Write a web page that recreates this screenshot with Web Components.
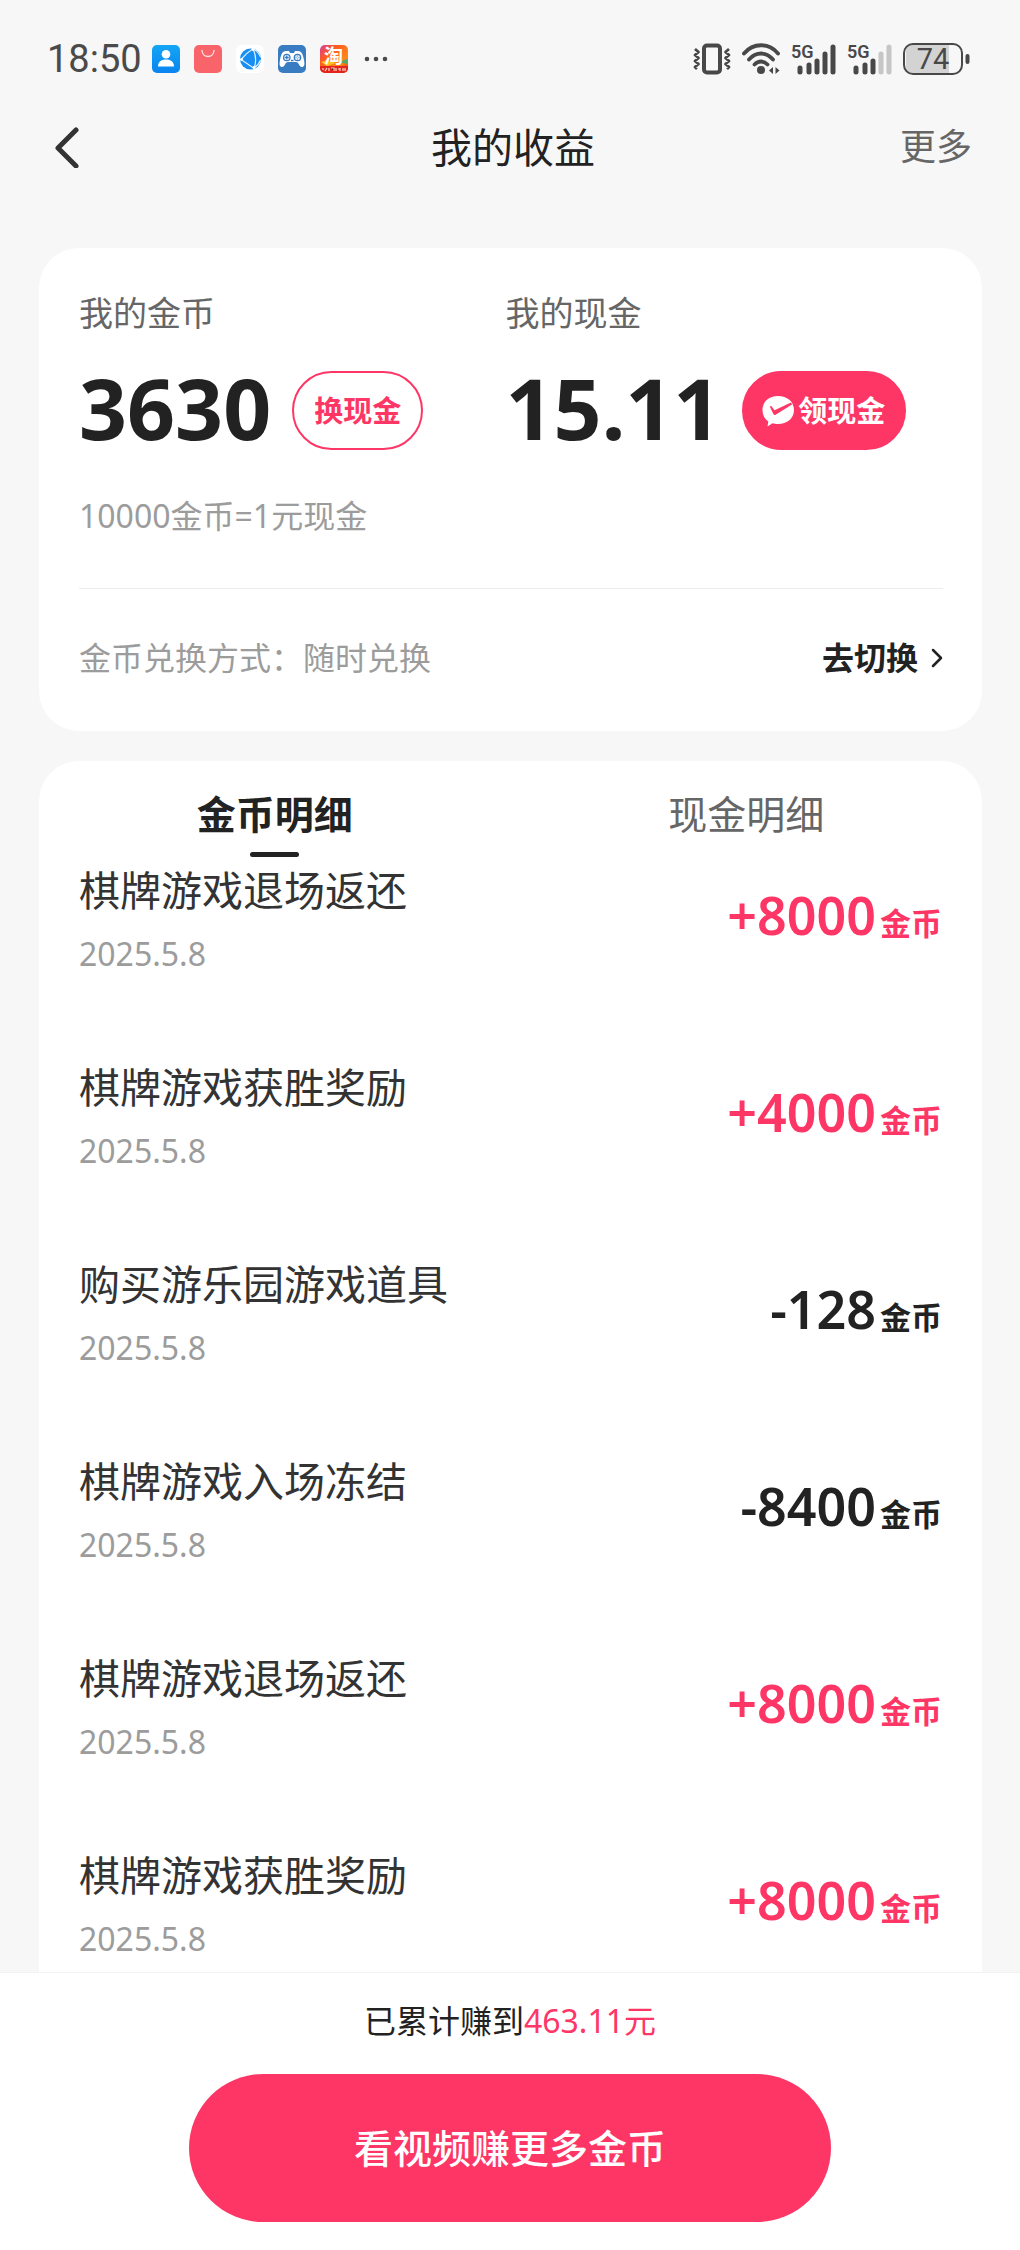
<!DOCTYPE html>
<html lang="zh-CN">
<head>
<meta charset="utf-8">
<meta name="viewport" content="width=device-width, initial-scale=1">
<title>我的收益</title>
<style>
  :root {
    --ink: #222222;
    --sub: #666666;
    --mute: #9c9c9c;
    --brand: #fe3666;
    --page: #f7f7f7;
    --line: #ececec;
  }
  html, body { margin: 0; height: 100%; }
  body {
    background: var(--page);
    color: var(--ink);
    font-family: "Noto Sans", "Noto Sans CJK SC", sans-serif;
  }
</style>
</head>
<body>
<income-page></income-page>

<script>
const base = `
  *, *::before { box-sizing: border-box; }
  button { font: inherit; color: inherit; background: none; border: 0; padding: 0; margin: 0; cursor: pointer; }
  a { color: inherit; text-decoration: none; }
  svg { display: block; flex: none; }
`;

function define(name, css, html) {
  const template = document.createElement('template');
  customElements.define(name, class extends HTMLElement {
    connectedCallback() {
      if (this.shadowRoot) return;
      template.innerHTML = `<style>${base}${css}</style>` + (typeof html === 'function' ? html(this) : html);
      this.attachShadow({ mode: 'open' }).append(template.content.cloneNode(true));
    }
  });
}

define('status-bar', `
  :host { display: flex; justify-content: space-between; align-items: center; height: 118px; padding: 0 50px 0 47px; color: #4a4a4a; }
  .group { display: flex; align-items: center; gap: 14px; }
  .clock { gap: 10px; }
  .right { gap: 11px; }
  time { font: 38px/48px Roboto, sans-serif; }
  text { font-family: Roboto, "Noto Sans CJK SC", sans-serif; }
`, `
  <div class="group clock">
    <time>18:50</time>
    <div class="group">
    <svg width="28" height="28" viewBox="0 0 28 28"><defs><linearGradient id="c" x2="0" y2="1"><stop stop-color="#14a6f5"/><stop offset="1" stop-color="#0a84f0"/></linearGradient></defs><rect width="28" height="28" rx="5" fill="url(#c)"/><circle cx="14" cy="9.200" r="4.300" fill="#fff"/><path d="M6 21.500c0-4.500 3.200-7 8-7s8 2.500 8 7z" fill="#fff"/></svg>
    <svg width="28" height="28" viewBox="0 0 28 28"><rect width="28" height="28" rx="5" fill="#f9646b"/><path d="M8 5.500c.5 8 11.500 8 12 0" fill="none" stroke="#ffe3e3" stroke-width="1.300" stroke-linecap="round"/></svg>
    <svg width="28" height="28" viewBox="0 0 28 28"><rect width="28" height="28" rx="6" fill="#fff"/><circle cx="14.500" cy="14" r="10.500" fill="#198ef2"/><path d="M17 3.800C12 7 7.500 11.500 5 14.500 9.500 17.500 14 20.500 18 23.500 20.500 17 20 10 17 3.800M17 4c3 1 6 4.500 7.500 8M18 23c3-2 5.500-5 6.500-8" fill="none" stroke="#d7efff" stroke-width="1.200"/><circle cx="17" cy="4.500" r="1.400" fill="#fff"/><circle cx="5.500" cy="14.500" r="1.400" fill="#fff"/><circle cx="18" cy="22.500" r="1.400" fill="#fff"/></svg>
    <svg width="28" height="28" viewBox="0 0 28 28"><rect width="28" height="28" rx="5" fill="#3a7cc2"/><path d="M8 6h3l1 2h4l1-2h3c4 0 5 4 6 9 1 5 0 7-2 7-3 0-3-5-6-5h-8c-3 0-3 5-6 5-2 0-3-2-2-7 1-5 2-9 6-9z" fill="#fff"/><circle cx="8.800" cy="12.500" r="3.200" fill="none" stroke="#3a7cc2" stroke-width="1.300"/><path d="M8.800 10.500v4M6.800 12.500h4M17.500 12.500h1M20.500 12.500h1M19.500 10.500v1M19.500 13.500v1M13 15.500h2.500" stroke="#3a7cc2" stroke-width="1.300"/><circle cx="19.500" cy="12.500" r="3.200" fill="none" stroke="#3a7cc2" stroke-width="1.300"/></svg>
    <svg width="28" height="28" viewBox="0 0 28 28"><defs><linearGradient id="t" x2="1" y2="1"><stop stop-color="#d23ea0"/><stop offset=".3" stop-color="#ff5a1e"/><stop offset=".7" stop-color="#ff8a1a"/><stop offset="1" stop-color="#e52d1c"/></linearGradient><clipPath id="k"><rect width="28" height="28" rx="5"/></clipPath></defs><g clip-path="url(#k)"><rect width="28" height="28" fill="url(#t)"/><path d="M1 17l7-2 8 3-9 3z" fill="#ffc21f"/><path d="M19 17l8-3v5z" fill="#58a86a"/><path d="M0 21h28v7H0z" fill="#e3241c"/><path d="M3 23v2M5 26l2-3M9 23v3M11 23h3v3M16 23v3M18 24h2M20 26v-3M23 23v3M25 23v3" stroke="#ffd9c8" stroke-width="1.200"/></g><text x="4" y="17.500" font-size="19" font-weight="700" fill="#fff">淘</text></svg>
    <svg width="30" height="28" viewBox="0 0 30 28" fill="#4a4a4a"><circle cx="5" cy="14" r="2.300"/><circle cx="14" cy="14" r="2.300"/><circle cx="23" cy="14" r="2.300"/></svg>
    </div>
  </div>
  <div class="group right">
    <svg width="38" height="32" viewBox="0 0 38 32" fill="none" stroke="#484848"><rect x="11" y="2.500" width="16" height="27" rx="3" stroke-width="4"/><path d="M2 6l3.500 3L2 12l3.500 3L2 18l3.500 3L2 24l2 2M36 6l-3.500 3 3.500 3-3.500 3 3.500 3-3.500 3 3.500 3-2 2" stroke-width="2.800" stroke-linejoin="round"/></svg>
    <svg width="38" height="32" viewBox="0 0 38 32" fill="none" stroke="#484848" stroke-width="3.800" stroke-linecap="round"><path d="M2 10.500c9-11 25-11 34 0M7 16.500c7-8 17-8 24 0M12.500 21.500c4-4 9-4 13 0"/><circle cx="19" cy="27" r="4" fill="#484848" stroke="none"/><path d="M31 24v7l-4-3.500zM33.500 24v7l4-3.500z" fill="#484848" stroke="none"/></svg>
    <svg width="45" height="44" viewBox="0 -6 45 44"><text x="0" y="15" font-size="18" font-weight="600" fill="#484848">5G</text><path d="M9 25v4M18 22v7M26 18v11M34 11v18M42 4v25" stroke="#484848" stroke-width="5" stroke-linecap="round"/></svg>
    <svg width="45" height="44" viewBox="0 -6 45 44"><text x="0" y="15" font-size="18" font-weight="600" fill="#484848">5G</text><path d="M9 25v4M18 22v7M26 18v11" stroke="#484848" stroke-width="5" stroke-linecap="round"/><path d="M34 11v18M42 4v25" stroke="#c6c6c6" stroke-width="5" stroke-linecap="round"/></svg>
    <svg width="67" height="42" viewBox="0 -4 67 42"><path d="M10 3h36v28H10c-5 0-7-3-7-7V10c0-4 2-7 7-7z" fill="#d3d3d3"/><rect x="1" y="2" width="58" height="30" rx="9" fill="none" stroke="#484848" stroke-width="2"/><path d="M64.500 14v6" stroke="#484848" stroke-width="4" stroke-linecap="round"/><text x="30" y="27" font-size="29" text-anchor="middle" fill="#484848">74</text></svg>
  </div>
`);

define('page-header', `
  :host { display: grid; grid-template-columns: 1fr auto 1fr; align-items: center; padding: 0 48px 0 54px; }
  h1 { margin: 0; font-weight: 400; font-size: 41px; line-height: 58px; }
  .back { justify-self: start; }
  .more { justify-self: end; font-size: 36px; line-height: 48px; color: var(--sub); }
`, `
  <button class="back" aria-label="返回"><svg width="26" height="42" viewBox="0 0 26 42" fill="none" stroke="#333" stroke-width="5" stroke-linecap="round" stroke-linejoin="round"><path d="M22 4L4 22 22 40"/></svg></button>
  <h1><slot></slot></h1>
  <a class="more" href="#more">更多</a>
`);

define('pill-button', `
  :host { display: inline-flex; }
  button { display: flex; align-items: center; justify-content: center; gap: 3px; height: 79px; padding: 0 20px; border-radius: 40px; border: 2px solid var(--brand); color: var(--brand); font-size: 29px; line-height: 40px; font-weight: 700; white-space: nowrap; }
  :host([solid]) button { background: var(--brand); color: #fff; padding: 0 19px 0 18px; }
`, `<button><slot name="icon"></slot><span><slot></slot></span></button>`);

define('balance-item', `
  :host { display: block; }
  .label { font-size: 34px; line-height: 48px; color: var(--sub); }
  .row { display: flex; align-items: center; gap: 21px; margin-top: 34px; height: 79px; }
  strong { padding-bottom: 6px; font-size: 84px; line-height: 72px; font-weight: 700; }
`, el => `
  <div class="label">${el.getAttribute('label')}</div>
  <div class="row"><strong>${el.getAttribute('value')}</strong><slot></slot></div>
`);

define('balance-card', `
  :host { display: block; margin: 72px 38px 0 39px; padding: 41px 39px 0 40px; background: #fff; border-radius: 40px; }
  .balances { display: grid; grid-template-columns: 39fr 40fr; }
  .rate { margin-top: 44px; font-size: 32px; line-height: 44px; color: var(--mute); }
  .mode { display: flex; justify-content: space-between; align-items: center; height: 143px; margin-top: 50px; border-top: 1px solid var(--line); padding-bottom: 4px; font-size: 32px; line-height: 44px; color: var(--mute); }
  .mode a { display: flex; align-items: center; gap: 13px; color: var(--ink); font-weight: 700; }
`, `
  <div class="balances">
    <balance-item label="我的金币" value="3630"><pill-button>换现金</pill-button></balance-item>
    <balance-item label="我的现金" value="15.11"><pill-button solid>
      <svg slot="icon" width="33" height="32" viewBox="0 0 33 32"><path d="M16 1c9 0 16 5.500 16 14s-7 14-16 14c-2 0-4-.3-5.500-.8L5.500 31.500l.8-5C2.500 24 .5 20 .5 15 .5 6.500 7 1 16 1z" fill="#fff"/><path d="M8 12c0-1 1-1.500 1.500-.7l3 4L29 7.500l1 2-16.500 10.300c-.8.500-1.500.3-2-.5z" fill="#fe3666"/></svg>领现金</pill-button></balance-item>
  </div>
  <div class="rate">10000金币=1元现金</div>
  <div class="mode"><span>金币兑换方式：随时兑换</span>
    <a href="#switch">去切换<svg width="12" height="20" viewBox="0 0 12 20" fill="none" stroke="#222" stroke-width="2.500" stroke-linecap="round" stroke-linejoin="round"><path d="M2 2l8 8-8 8"/></svg></a>
  </div>
`);

define('detail-tabs', `
  :host { display: grid; grid-template-columns: 1fr 1fr; padding-top: 25px; }
  button { display: flex; flex-direction: column; align-items: center; gap: 10px; font-size: 39px; line-height: 56px; color: var(--sub); }
  button::after { content: ""; width: 49px; height: 5px; border-radius: 3px; }
  button[aria-selected="true"] { color: var(--ink); font-weight: 700; }
  button[aria-selected="true"]::after { background: var(--ink); }
`, `
  <button role="tab" aria-selected="true">金币明细</button>
  <button role="tab" aria-selected="false">现金明细</button>
`);

define('record-row', `
  :host { display: flex; justify-content: space-between; align-items: center; padding-bottom: 83px; }
  .title { font-size: 41px; line-height: 56px; color: #333; }
  time { display: block; margin-top: 14px; font-size: 32px; line-height: 44px; color: var(--mute); }
  .amount { display: flex; align-items: baseline; gap: 4px; color: var(--ink); font-size: 52px; line-height: 72px; font-weight: 600; }
  .amount.gain { color: var(--brand); }
  small { font-size: 31px; font-weight: 700; }
`, el => {
  const amount = el.getAttribute('amount');
  return `
  <div><div class="title"><slot></slot></div><time>${el.getAttribute('date')}</time></div>
  <div class="amount ${amount.startsWith('+') ? 'gain' : ''}"><span>${amount}</span><small>金币</small></div>`;
});

define('detail-card', `
  :host { display: flex; flex-direction: column; flex: 1; min-height: 0; overflow: hidden; margin: 30px 38px 0 39px; background: #fff; border-radius: 40px 40px 0 0; }
  .list { flex: 1; min-height: 0; overflow: hidden; padding: 5px 40px 0; }
`, `
  <detail-tabs role="tablist"></detail-tabs>
  <div class="list">
    <record-row date="2025.5.8" amount="+8000">棋牌游戏退场返还</record-row>
    <record-row date="2025.5.8" amount="+4000">棋牌游戏获胜奖励</record-row>
    <record-row date="2025.5.8" amount="-128">购买游乐园游戏道具</record-row>
    <record-row date="2025.5.8" amount="-8400">棋牌游戏入场冻结</record-row>
    <record-row date="2025.5.8" amount="+8000">棋牌游戏退场返还</record-row>
    <record-row date="2025.5.8" amount="+8000">棋牌游戏获胜奖励</record-row>
  </div>
`);

define('earn-footer', `
  :host { display: flex; flex-direction: column; align-items: center; gap: 31px; padding: 26px 0 28px; background: #fff; border-top: 1px solid #f2f2f2; }
  p { margin: 0; font-size: 32px; line-height: 44px; }
  em { font-style: normal; color: var(--brand); }
  button { width: 63%; height: 148px; border-radius: 74px; background: var(--brand); color: #fff; font-size: 39px; line-height: 56px; font-weight: 500; }
`, `
  <p>已累计赚到<em>463.11元</em></p>
  <button>看视频赚更多金币</button>
`);

define('income-page', `
  :host { display: flex; flex-direction: column; height: 100vh; }
`, `
  <status-bar></status-bar>
  <page-header>我的收益</page-header>
  <balance-card></balance-card>
  <detail-card></detail-card>
  <earn-footer></earn-footer>
`);
</script>
</body>
</html>
